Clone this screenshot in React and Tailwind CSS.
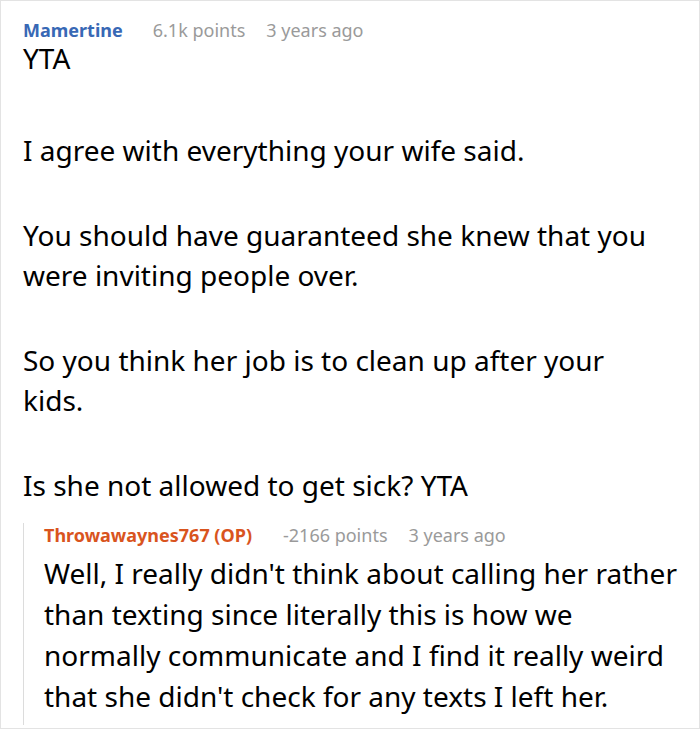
import React from "react";

const paragraphs = [
  "I agree with everything your wife said.",
  "You should have guaranteed she knew that you were inviting people over.",
  "So you think her job is to clean up after your kids.",
  "Is she not allowed to get sick? YTA",
];

const App = () => {
  return (
    <div className="w-[700px] h-[729px] bg-white border border-[#e3e3e3] font-['Noto_Sans',sans-serif] text-black overflow-hidden">
      <div className="pl-[22px] pr-4 pt-[17px]">
        {/* Top comment */}
        <div className="flex items-center text-[18px] leading-[24px]">
          <span className="font-bold text-[#3868b5]">Mamertine</span>
          <span className="ml-[30px] text-[#9a9a9a]">6.1k points</span>
          <span className="ml-[21px] text-[#9a9a9a]">3 years ago</span>
        </div>
        <p className="text-[28px] leading-[32px]">YTA</p>
        <div className="mt-[56px]">
          {paragraphs.map((p, i) => (
            <p key={i} className="text-[28px] leading-[40px] mb-[45px] pr-[30px]">
              {p}
            </p>
          ))}
        </div>

        {/* Reply */}
        <div className="-mt-[27px] border-l border-[#dcdcdc] pl-[20px] pb-[8px]">
          <div className="flex items-center text-[18px] leading-[24px]">
            <span className="font-bold text-[#d9541e]">Throwawaynes767 (OP)</span>
            <span className="ml-[31px] text-[#9a9a9a]">-2166 points</span>
            <span className="ml-[21px] text-[#9a9a9a]">3 years ago</span>
          </div>
          <p className="text-[28px] leading-[41px] mt-[6px]">
            Well, I really didn't think about calling her rather than texting since literally this is how we normally communicate and I find it really weird that she didn't check for any texts I left her.
          </p>
        </div>
      </div>
    </div>
  );
};

export default App;
